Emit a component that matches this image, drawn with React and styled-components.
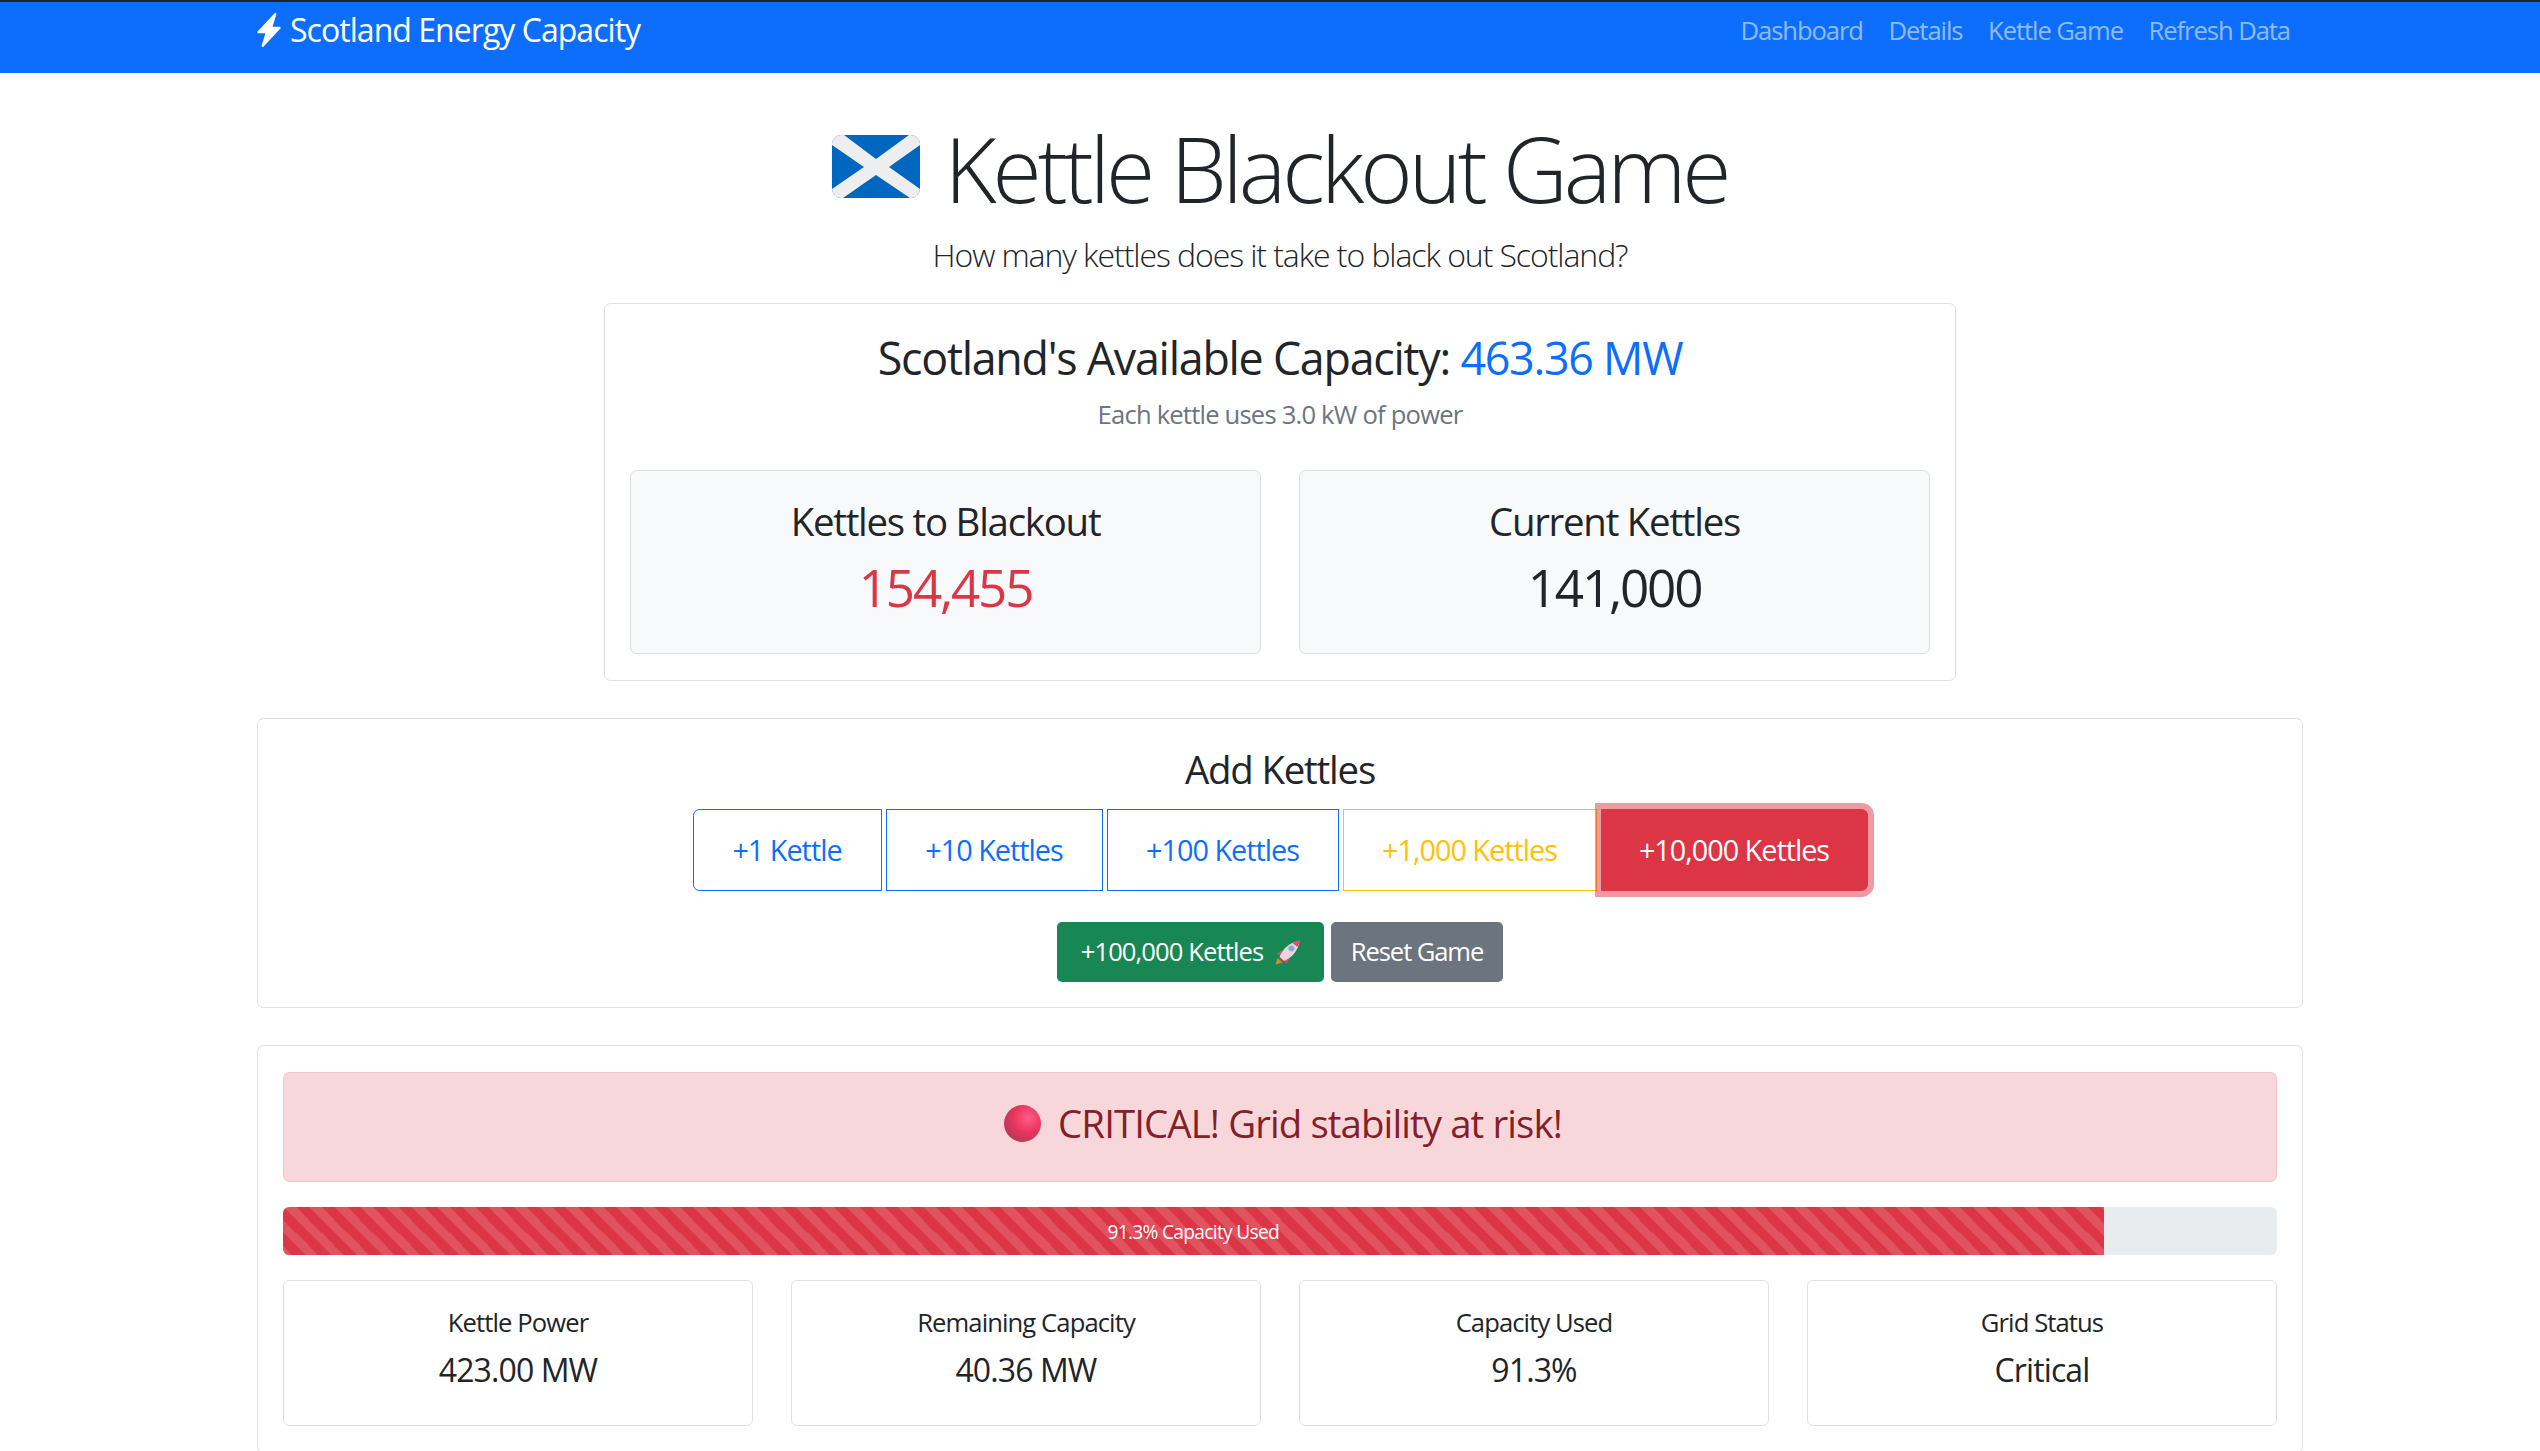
import React from "react";
import styled, { createGlobalStyle } from "styled-components";
import { BsLightningChargeFill } from "react-icons/bs";

const Global = createGlobalStyle`
  html, body { margin: 0; padding: 0; background: #fff; overflow: hidden; }
  body { font-family: "Open Sans", "Noto Sans", "Liberation Sans", sans-serif; color: #212529; font-size: 25.6px; line-height: 1.5; }
  * { box-sizing: border-box; }
`;

const Nav = styled.nav`
  height: 73px; background: #0d6efd; border-top: 2px solid #212529;
  display: flex; align-items: flex-start; justify-content: space-between;
  padding: 0 250px 0 252px;
`;
const Brand = styled.a`
  display: flex; align-items: center; gap: 4px; color: #fff; font-size: 32px; letter-spacing: -0.96px; line-height: 56px;
  svg { width: 34px; height: 34px; }
`;
const NavLinks = styled.div`display: flex; gap: 25.6px;`;
const NavLink = styled.a`color: rgba(255,255,255,.55); font-size: 25.6px; line-height: 58px; letter-spacing: -1.07px;`;

const Main = styled.main`
  width: 2046px; margin: 0 auto 0 257px; display: flex; flex-direction: column; align-items: center; padding-top: 41px;
`;
const Title = styled.h1`
  margin: 0; font-size: 89.6px; font-weight: 300; line-height: 108px; letter-spacing: -4px; display: flex; align-items: center; gap: 24px;
`;
const FlagSvg = styled.svg`flex: none; margin-bottom: 3px;`;
const Lead = styled.p`margin: 14px 0 29px; font-size: 32px; font-weight: 300; line-height: 38px; letter-spacing: -1.08px;`;
const Card = styled.section`
  width: ${p => p.$w || "100%"}; border: 1px solid #dfdfdf; border-radius: 6.4px; background: #fff;
  padding: ${p => p.$pad}; margin-bottom: ${p => p.$mb || "0"}; text-align: center;
`;
const CapHeading = styled.h3`margin: 0; font-size: 44.8px; font-weight: 400; line-height: 42px; letter-spacing: -1.25px;`;
const Accent = styled.span`color: #0d6efd;`;
const Muted = styled.p`margin: 21px 0 40px; font-size: 25.6px; line-height: 30px; color: #6c757d; letter-spacing: -0.8px;`;
const Pair = styled.div`display: grid; grid-template-columns: 631px 631px; gap: 38px;`;
const Tile = styled.div`
  background: #f8f9fa; border: 1px solid #dfdfdf; border-radius: 6.4px; padding: 32px 10px 35px; height: 184px;
`;
const TileLabel = styled.h4`margin: 0; font-size: 38.4px; font-weight: 400; line-height: 36px; letter-spacing: -1.25px;`;
const TileValue = styled.div`margin-top: 18px; font-size: 51.2px; line-height: 60px; color: ${p => p.$color || "#212529"}; letter-spacing: -2.2px;`;

const AddTitle = styled.h4`margin: 0 0 22px; font-size: 38.4px; font-weight: 400; line-height: 36px; letter-spacing: -1.2px;`;
const Group = styled.div`display: flex; justify-content: center; gap: 4px; height: 82px; margin-bottom: 31px;`;
const Outline = styled.button`
  width: ${p => p.$w}px; border: 1px solid ${p => p.$c}; color: ${p => p.$c}; background: #fff; font: inherit; font-size: 28.8px;
  letter-spacing: -1px; padding: 0; border-radius: ${p => p.$r || "0"};
`;
const Danger = styled(Outline)`
  background: #dc3545; color: #fff; border-color: #dc3545; box-shadow: 0 0 0 6px rgba(220,53,69,.5); position: relative; border-radius: 0 6.4px 6.4px 0;
`;
const Row = styled.div`display: flex; justify-content: center; gap: 7px;`;
const Solid = styled.button`
  height: 60px; width: ${p => p.$w}px; background: ${p => p.$c}; color: #fff; border: 0; border-radius: 5px; font: inherit; font-size: 25.6px; letter-spacing: ${p => p.$ls};
  display: flex; align-items: center; justify-content: center; gap: 12px; padding: 0;
`;
const Alert = styled.div`
  height: 110px; background: #f8d7da; border: 1px solid #f5c2c7; border-radius: 6.4px; color: #842029;
  display: flex; align-items: center; justify-content: center; gap: 17px; font-size: 38.4px; letter-spacing: -0.9px; padding: 0 0 7px 6px;
`;
const Progress = styled.div`margin: 25px 0 25px; height: 48px; background: #e9ecef; border-radius: 6.4px; overflow: hidden; display: flex;`;
const Bar = styled.div`
  background-color: #dc3545;
  background-image: linear-gradient(45deg, rgba(255,255,255,.15) 25%, transparent 25%, transparent 50%, rgba(255,255,255,.15) 50%, rgba(255,255,255,.15) 75%, transparent 75%, transparent);
  background-size: 25.6px 25.6px; color: #fff; font-size: 19.2px; line-height: 50px; text-align: center; letter-spacing: -0.7px;
`;
const Stats = styled.div`display: grid; grid-template-columns: repeat(4, 470px); justify-content: space-between;`;
const Stat = styled.div`border: 1px solid #dfdfdf; border-radius: 6.4px; height: 146px; padding: 26px 10px 0;`;
const StatLabel = styled.div`font-size: 25.6px; line-height: 32px; letter-spacing: -0.9px;`;
const StatValue = styled.div`margin-top: 11px; font-size: 32px; line-height: 40px; letter-spacing: -0.9px;`;

const Flag = () => (
  <FlagSvg width="88" height="63" viewBox="0 0 88 63">
    <defs><clipPath id="fc"><rect width="88" height="63" rx="9" /></clipPath></defs>
    <g clipPath="url(#fc)">
      <rect width="88" height="63" fill="#0067c0" />
      <path d="M0 0 L12 0 L44 24 L77 0 L88 0 L88 10 L57 32 L88 54 L88 63 L78 63 L44 40 L11 63 L0 63 L0 54 L32 32 L0 10 Z" fill="#eeeeee" />
    </g>
  </FlagSvg>
);
const Rocket = () => (
  <svg width="25" height="25" viewBox="0 0 25 25">
    <path d="M0.5 24.5 L2.5 18 L7.5 22.5 Z" fill="#e8812c" />
    <path d="M7 10 L2 14 L7 16 Z" fill="#f43f75" />
    <path d="M15 18 L11 24 L9 18 Z" fill="#f43f75" />
    <path d="M4.5 17 C8 8 15 2.5 24.5 0.5 C23.5 10 18 17 9 21 Z" fill="#e8d5de" />
    <path d="M17.5 3 C19.5 1.8 22 1 24.5 0.5 C24.2 3 23.5 5 22.5 7 Z" fill="#f43f75" />
    <path d="M4.5 17 L9 21 L7 21.5 L4 18.5 Z" fill="#c2406f" />
    <circle cx="16.5" cy="8.5" r="2.8" fill="#7ca6e8" stroke="#bdb0c6" strokeWidth="0.8" />
  </svg>
);
const Sphere = () => (
  <svg width="37" height="37" viewBox="0 0 37 37">
    <defs>
      <radialGradient id="sp" cx="0.65" cy="0.35" r="0.75">
        <stop offset="0" stopColor="#ff5c88" />
        <stop offset="0.55" stopColor="#e8345c" />
        <stop offset="1" stopColor="#b03a58" />
      </radialGradient>
    </defs>
    <circle cx="18.5" cy="18.5" r="18.5" fill="url(#sp)" />
  </svg>
);

const stats = [
  ["Kettle Power", "423.00 MW"],
  ["Remaining Capacity", "40.36 MW"],
  ["Capacity Used", "91.3%"],
  ["Grid Status", "Critical"],
];

export default function App() {
  return (
    <>
      <Global />
      <Nav>
        <Brand><BsLightningChargeFill />Scotland Energy Capacity</Brand>
        <NavLinks>
          <NavLink>Dashboard</NavLink>
          <NavLink>Details</NavLink>
          <NavLink>Kettle Game</NavLink>
          <NavLink>Refresh Data</NavLink>
        </NavLinks>
      </Nav>
      <Main>
        <Title><Flag />Kettle Blackout Game</Title>
        <Lead>How many kettles does it take to black out Scotland?</Lead>
        <Card $w="1352px" $pad="33px 25px 26px" $mb="37px">
          <CapHeading>Scotland's Available Capacity: <Accent>463.36 MW</Accent></CapHeading>
          <Muted>Each kettle uses 3.0 kW of power</Muted>
          <Pair>
            <Tile><TileLabel>Kettles to Blackout</TileLabel><TileValue $color="#dc3545">154,455</TileValue></Tile>
            <Tile><TileLabel>Current Kettles</TileLabel><TileValue>141,000</TileValue></Tile>
          </Pair>
        </Card>
        <Card $pad="32px 25px 25px" $mb="37px">
          <AddTitle>Add Kettles</AddTitle>
          <Group>
            <Outline $w={189} $c="#0d6efd" $r="6.4px 0 0 6.4px">+1 Kettle</Outline>
            <Outline $w={217} $c="#0d6efd">+10 Kettles</Outline>
            <Outline $w={232} $c="#0d6efd">+100 Kettles</Outline>
            <Outline $w={254} $c="#ffc107">+1,000 Kettles</Outline>
            <Danger $w={267} $c="#dc3545">+10,000 Kettles</Danger>
          </Group>
          <Row>
            <Solid $w={267} $c="#198754" $ls="-0.9px">+100,000 Kettles <Rocket /></Solid>
            <Solid $w={172} $c="#6c757d" $ls="-1.1px">Reset Game</Solid>
          </Row>
        </Card>
        <Card $pad="26px 25px 26px">
          <Alert><Sphere />CRITICAL! Grid stability at risk!</Alert>
          <Progress><Bar style={{ width: "91.3%" }}>91.3% Capacity Used</Bar></Progress>
          <Stats>
            {stats.map(([l, v]) => (
              <Stat key={l}><StatLabel>{l}</StatLabel><StatValue>{v}</StatValue></Stat>
            ))}
          </Stats>
        </Card>
      </Main>
    </>
  );
}
